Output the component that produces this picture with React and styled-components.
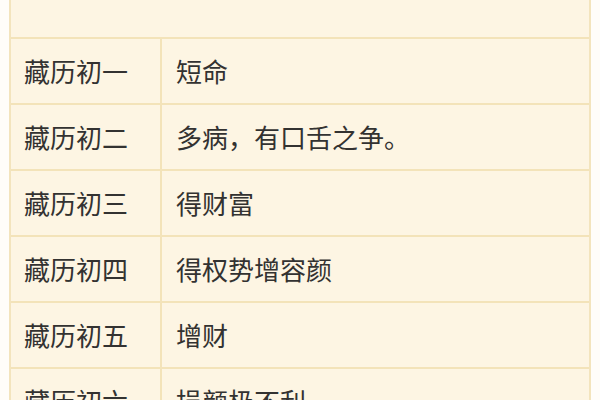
import React from "react";
import styled, { createGlobalStyle } from "styled-components";

const Global = createGlobalStyle`
  html, body { margin: 0; padding: 0; background: #fffdf9; }
  body { font-family: "Noto Sans CJK SC", "Noto Sans", sans-serif; }
`;

const Page = styled.div`
  width: 600px;
  height: 400px;
  overflow: hidden;
  padding-left: 9px;
  box-sizing: border-box;
`;

const Table = styled.div`
  width: 582px;
  display: grid;
  grid-template-columns: 151px 1fr;
  background: #fdf5e3;
  border-left: 2px solid #f3e4bd;
  border-right: 2px solid #f3e4bd;
  box-sizing: border-box;
`;

const Cell = styled.div`
  height: ${(p) => p.$h}px;
  border-bottom: 2px solid #f3e3b9;
  border-right: ${(p) => (p.$first ? "2px solid #f3e3b9" : "none")};
  box-sizing: border-box;
  display: flex;
  align-items: center;
  padding-left: ${(p) => (p.$first ? 13 : 14)}px;
  padding-bottom: 2px;
  font-size: 26px;
  color: #333231;
  white-space: nowrap;
`;

const HeaderCell = styled.div`
  grid-column: 1 / span 2;
  height: 39px;
  border-bottom: 2px solid #f3e3b9;
  box-sizing: border-box;
`;

const rows = [
  ["藏历初一", "短命"],
  ["藏历初二", "多病，有口舌之争。"],
  ["藏历初三", "得财富"],
  ["藏历初四", "得权势增容颜"],
  ["藏历初五", "增财"],
  ["藏历初六", "损颜极不利"],
];

export default function App() {
  return (
    <>
      <Global />
      <Page>
        <Table>
          <HeaderCell />
          {rows.map(([a, b]) => (
            <React.Fragment key={a}>
              <Cell $first $h={66}>{a}</Cell>
              <Cell $h={66}>{b}</Cell>
            </React.Fragment>
          ))}
        </Table>
      </Page>
    </>
  );
}
